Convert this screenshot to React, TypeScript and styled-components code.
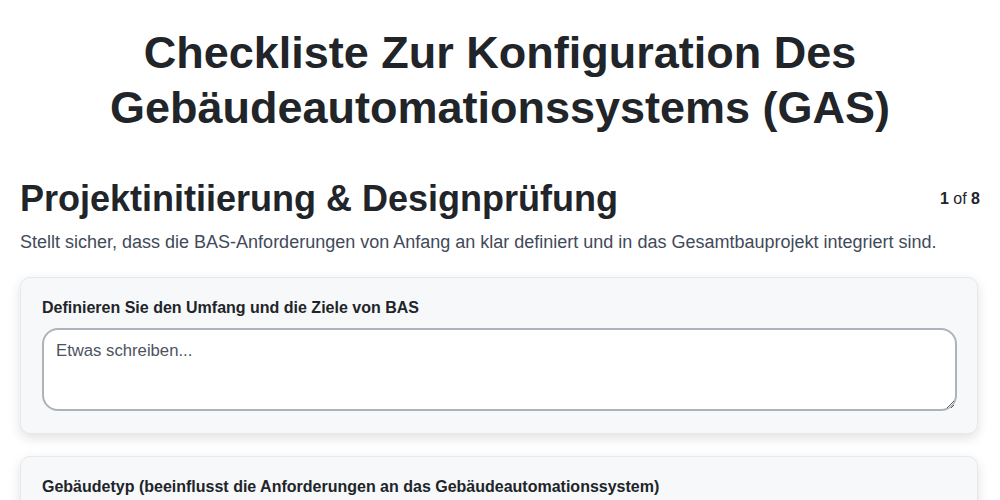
import React from 'react'
import styled, { createGlobalStyle } from 'styled-components'

const GlobalStyle = createGlobalStyle`
  * { box-sizing: border-box; }
  body {
    margin: 0;
    background: #ffffff;
    font-family: 'Liberation Sans', Arial, sans-serif;
    color: #212529;
  }
`

const Page = styled.div`
  padding: 25px 20px 0 20px;
`

const Title = styled.h1`
  margin: 0 0 42px;
  text-align: center;
  font-size: 45px;
  line-height: 55px;
  font-weight: 700;
  color: #212529;
  padding: 0 80px;
`

const SectionHeader = styled.div`
  display: flex;
  align-items: center;
  justify-content: space-between;
`

const SectionTitle = styled.h2`
  margin: 0;
  font-size: 36px;
  line-height: 44px;
  font-weight: 700;
  color: #212529;
`

const Counter = styled.span`
  font-size: 16px;
  color: #212529;
  b { font-weight: 700; }
`

const Description = styled.p`
  margin: 8px 0 22px;
  font-size: 18px;
  line-height: 26px;
  color: #3f4a5a;
`

const CardList = styled.div`
  display: flex;
  flex-direction: column;
  gap: 22px;
  margin-right: 2px;
`

const Card = styled.section`
  background: #f7f8fa;
  border: 1px solid #e6e8eb;
  border-radius: 10px;
  padding: 20px 20px 22px 21px;
  box-shadow: 0 4px 12px rgba(0, 0, 0, 0.12);
`

const Label = styled.label`
  display: block;
  font-size: 16px;
  font-weight: 700;
  line-height: 20px;
  color: #212529;
  margin-bottom: 10px;
`

const TextArea = styled.textarea`
  display: block;
  width: 100%;
  height: 83px;
  border: 2px solid #adb3ba;
  border-radius: 16px;
  padding: 11px 12px;
  font-family: 'Liberation Sans', Arial, sans-serif;
  font-size: 16.7px;
  background: #ffffff;
  color: #212529;
  resize: vertical;
  outline: none;
  &::placeholder {
    color: #4b5261;
  }
`

const questions = [
  'Definieren Sie den Umfang und die Ziele von BAS',
  'Gebäudetyp (beeinflusst die Anforderungen an das Gebäudeautomationssystem)',
]

export default function App() {
  return (
    <>
      <GlobalStyle />
      <Page>
        <Title>Checkliste Zur Konfiguration Des Gebäudeautomationssystems (GAS)</Title>
        <SectionHeader>
          <SectionTitle>Projektinitiierung &amp; Designprüfung</SectionTitle>
          <Counter>
            <b>1</b> of <b>8</b>
          </Counter>
        </SectionHeader>
        <Description>
          Stellt sicher, dass die BAS-Anforderungen von Anfang an klar definiert und in das Gesamtbauprojekt integriert sind.
        </Description>
        <CardList>
          {questions.map((q) => (
            <Card key={q}>
              <Label>{q}</Label>
              <TextArea placeholder='Etwas schreiben...' />
            </Card>
          ))}
        </CardList>
      </Page>
    </>
  )
}
